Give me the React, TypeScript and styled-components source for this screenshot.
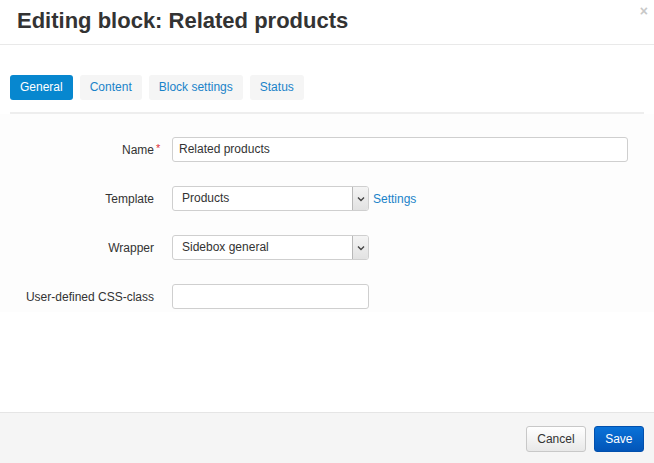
import React from "react";
import styled, { createGlobalStyle } from "styled-components";

const Global = createGlobalStyle`
  html, body { margin: 0; padding: 0; height: 100%; background: #fff; }
  body { font-family: "Liberation Sans", Arial, sans-serif; color: #333; }
  #root { height: 100%; }
`;

const Dialog = styled.div`
  display: flex;
  flex-direction: column;
  height: 463px;
  width: 654px;
  box-sizing: border-box;
`;

const Header = styled.div`
  position: relative;
  height: 45px;
  box-sizing: border-box;
  border-bottom: 1px solid #e9e9e9;
  padding: 7px 17px 0;
`;

const Title = styled.h1`
  margin: 0;
  font-size: 22px;
  font-weight: bold;
  line-height: 28px;
  color: #333;
`;

const Close = styled.span`
  position: absolute;
  right: 6px;
  top: 3px;
  font-size: 14px;
  font-weight: bold;
  color: #c8c8c8;
  line-height: 16px;
`;

const Body = styled.div`
  flex: 1;
  padding: 30px 10px 0;
`;

const Tabs = styled.div`
  display: flex;
  gap: 7px;
  padding-bottom: 12px;
  border-bottom: 2px solid #eeeeee;
`;

const Tab = styled.div<{ $active?: boolean }>`
  height: 25px;
  line-height: 25px;
  padding: 0 10px;
  border-radius: 3px;
  font-size: 12px;
  background: ${(p) => (p.$active ? "#0787cf" : "#f5f5f5")};
  color: ${(p) => (p.$active ? "#ffffff" : "#1a83c9")};
`;

const Form = styled.div`
  display: flex;
  flex-direction: column;
  gap: 24px;
  padding: 23px 0 3px;
  margin: 0 -10px;
  background: #fdfdfd;
`;

const Row = styled.div`
  display: grid;
  grid-template-columns: 154px auto;
  column-gap: 18px;
  align-items: center;
  height: 25px;
`;

const Label = styled.label`
  position: relative;
  justify-self: end;
  font-size: 12px;
  color: #333;
`;

const Req = styled.span`
  position: absolute;
  left: 100%;
  top: -1px;
  margin-left: 2px;
  color: #e0303a;
  font-size: 11px;
`;

const Field = styled.div`
  display: flex;
  align-items: center;
  gap: 4px;
`;

const Input = styled.div<{ $w: number }>`
  width: ${(p) => p.$w}px;
  height: 25px;
  box-sizing: border-box;
  border: 1px solid #cfcfcf;
  border-radius: 3px;
  background: #fff;
  font-size: 12px;
  line-height: 23px;
  padding: 0 6px;
  color: #333;
`;

const Select = styled.div`
  display: flex;
  width: 197px;
  height: 25px;
  box-sizing: border-box;
  border: 1px solid #cfcfcf;
  border-radius: 3px;
  background: #fff;
  font-size: 12px;
  color: #333;
  overflow: hidden;
`;

const SelectText = styled.span`
  flex: 1;
  line-height: 23px;
  padding-left: 9px;
`;

const SelectArrow = styled.span`
  width: 15px;
  display: flex;
  align-items: center;
  justify-content: center;
  background: linear-gradient(#f4f4f4, #e2e2e2);
  border-left: 1px solid #b8b8b8;
`;

const Link = styled.a`
  font-size: 12px;
  color: #1a83c9;
  text-decoration: none;
`;

const Footer = styled.div`
  height: 51px;
  box-sizing: border-box;
  border-top: 1px solid #e5e5e5;
  background: #f5f5f5;
  display: flex;
  justify-content: flex-end;
  align-items: center;
  gap: 8px;
  padding: 2px 10px 0;
`;

const Button = styled.button<{ $primary?: boolean }>`
  height: 26px;
  box-sizing: border-box;
  font-family: "Liberation Sans", Arial, sans-serif;
  font-size: 12px;
  border-radius: 3px;
  padding: 0 10px;
  cursor: pointer;
  ${(p) =>
    p.$primary
      ? `background: linear-gradient(#0a72d8, #0255b8); color: #fff; border: 1px solid #0250ad; padding: 0 10.5px;`
      : `background: linear-gradient(#ffffff, #e8e8e8); color: #333; border: 1px solid #c8c8c8;`}
`;

const Chevron = () => (
  <svg width="8" height="6" viewBox="0 0 8 6">
    <path d="M1 1.5 L4 4.5 L7 1.5" fill="none" stroke="#444" strokeWidth="1.4" />
  </svg>
);

export default function App() {
  return (
    <>
      <Global />
      <Dialog>
        <Header>
          <Title>Editing block: Related products</Title>
          <Close>×</Close>
        </Header>
        <Body>
          <Tabs>
            <Tab $active>General</Tab>
            <Tab>Content</Tab>
            <Tab>Block settings</Tab>
            <Tab>Status</Tab>
          </Tabs>
          <Form>
            <Row>
              <Label>
                Name<Req>*</Req>
              </Label>
              <Field>
                <Input $w={456}>Related products</Input>
              </Field>
            </Row>
            <Row>
              <Label>Template</Label>
              <Field>
                <Select>
                  <SelectText>Products</SelectText>
                  <SelectArrow>
                    <Chevron />
                  </SelectArrow>
                </Select>
                <Link href="#">Settings</Link>
              </Field>
            </Row>
            <Row>
              <Label>Wrapper</Label>
              <Field>
                <Select>
                  <SelectText>Sidebox general</SelectText>
                  <SelectArrow>
                    <Chevron />
                  </SelectArrow>
                </Select>
              </Field>
            </Row>
            <Row>
              <Label>User-defined CSS-class</Label>
              <Field>
                <Input $w={197} />
              </Field>
            </Row>
          </Form>
        </Body>
        <Footer>
          <Button>Cancel</Button>
          <Button $primary>Save</Button>
        </Footer>
      </Dialog>
    </>
  );
}
